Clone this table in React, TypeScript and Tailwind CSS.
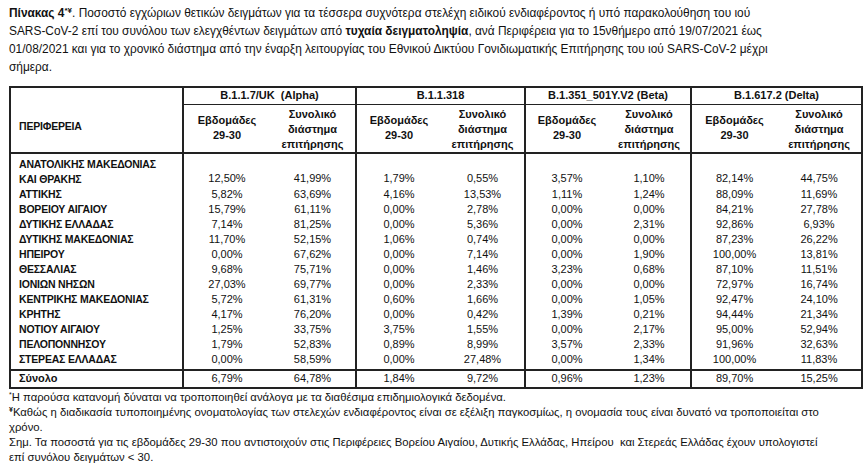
const rows: string[][] = [
  ["ΑΤΤΙΚΗΣ", "5,82%", "63,69%", "4,16%", "13,53%", "1,11%", "1,24%", "88,09%", "11,69%"],
  ["ΒΟΡΕΙΟΥ ΑΙΓΑΙΟΥ", "15,79%", "61,11%", "0,00%", "2,78%", "0,00%", "0,00%", "84,21%", "27,78%"],
  ["ΔΥΤΙΚΗΣ ΕΛΛΑΔΑΣ", "7,14%", "81,25%", "0,00%", "5,36%", "0,00%", "2,31%", "92,86%", "6,93%"],
  ["ΔΥΤΙΚΗΣ ΜΑΚΕΔΟΝΙΑΣ", "11,70%", "52,15%", "1,06%", "0,74%", "0,00%", "0,00%", "87,23%", "26,22%"],
  ["ΗΠΕΙΡΟΥ", "0,00%", "67,62%", "0,00%", "7,14%", "0,00%", "1,90%", "100,00%", "13,81%"],
  ["ΘΕΣΣΑΛΙΑΣ", "9,68%", "75,71%", "0,00%", "1,46%", "3,23%", "0,68%", "87,10%", "11,51%"],
  ["ΙΟΝΙΩΝ ΝΗΣΩΝ", "27,03%", "69,77%", "0,00%", "2,33%", "0,00%", "0,00%", "72,97%", "16,74%"],
  ["ΚΕΝΤΡΙΚΗΣ ΜΑΚΕΔΟΝΙΑΣ", "5,72%", "61,31%", "0,60%", "1,66%", "0,00%", "1,05%", "92,47%", "24,10%"],
  ["ΚΡΗΤΗΣ", "4,17%", "76,20%", "0,00%", "0,42%", "1,39%", "0,21%", "94,44%", "21,34%"],
  ["ΝΟΤΙΟΥ ΑΙΓΑΙΟΥ", "1,25%", "33,75%", "3,75%", "1,55%", "0,00%", "2,17%", "95,00%", "52,94%"],
  ["ΠΕΛΟΠΟΝΝΗΣΟΥ", "1,79%", "52,83%", "0,89%", "8,99%", "3,57%", "2,33%", "91,96%", "32,63%"],
  ["ΣΤΕΡΕΑΣ ΕΛΛΑΔΑΣ", "0,00%", "58,59%", "0,00%", "27,48%", "0,00%", "1,34%", "100,00%", "11,83%"],
];

const first = ["12,50%", "41,99%", "1,79%", "0,55%", "3,57%", "1,10%", "82,14%", "44,75%"];
const total = ["6,79%", "64,78%", "1,84%", "9,72%", "0,96%", "1,23%", "89,70%", "15,25%"];
const strains = ["B.1.1.7/UK\u00a0 (Alpha)", "B.1.1.318", "B.1.351_501Y.V2 (Beta)", "B.1.617.2 (Delta)"];

// group edge gets the vertical rule
const cellCls = (i: number) =>
  "text-center p-0 " + (i % 2 === 0 ? "border-l-2 border-[#222]" : "");

const nameCls = "font-bold pl-[8px] leading-[15px] text-[10.5px] tracking-[-0.2px]";

function SubHeads() {
  return (
    <>
      {strains.map((s) => [
        <th key={s + "a"} className="border-l-2 border-[#222] font-bold text-center align-middle p-0 leading-[15px]">
          Εβδομάδες<br />29-30
        </th>,
        <th key={s + "b"} className="font-bold text-center align-middle p-0 pt-[2px] leading-[15px]">
          Συνολικό<br />διάστημα<br />επιτήρησης
        </th>,
      ])}
    </>
  );
}

export default function App() {
  return (
    <div
      className="w-[868px] h-[471px] bg-white text-[#111] pl-[9px] pt-[4px] overflow-hidden"
      style={{ fontFamily: '"Liberation Sans", Arial, sans-serif' }}
    >
      <p className="text-[11.9px] leading-[18px] whitespace-nowrap">
        <b>
          Πίνακας 4<sup className="text-[8px]">*¥</sup>
        </b>
        . Ποσοστό εγχώριων θετικών δειγμάτων για τα τέσσερα συχνότερα στελέχη ειδικού ενδιαφέροντος ή υπό παρακολούθηση του ιού
        <br />
        SARS-CoV-2 επί του συνόλου των ελεγχθέντων δειγμάτων από <b>τυχαία δειγματοληψία</b>, ανά Περιφέρεια για το 15νθήμερο από 19/07/2021 έως
        <br />
        01/08/2021 και για το χρονικό διάστημα από την έναρξη λειτουργίας του Εθνικού Δικτύου Γονιδιωματικής Επιτήρησης του ιού SARS-CoV-2 μέχρι
        <br />
        σήμερα.
      </p>

      <table className="mt-[10px] w-[852px] table-fixed border-collapse border-2 border-[#222] text-[11px]">
        <colgroup>
          <col className="w-[173px]" />
          <col className="w-[87px]" />
          <col className="w-[86px]" />
          <col className="w-[85px]" />
          <col className="w-[84px]" />
          <col className="w-[83px]" />
          <col className="w-[83px]" />
          <col className="w-[86px]" />
          <col className="w-[85px]" />
        </colgroup>
        <thead>
          <tr className="h-[17px]">
            <th rowSpan={2} className="text-left font-bold pl-[8px] pt-[14px] border-b-2 border-[#222] text-[10.5px] tracking-[-0.2px]">
              ΠΕΡΙΦΕΡΕΙΑ
            </th>
            {strains.map((s) => (
              <th key={s} colSpan={2} className="border-l-2 border-b border-[#222] font-bold text-center p-0 leading-[15px]">
                {s}
              </th>
            ))}
          </tr>
          <tr className="h-[48px] border-b-2 border-[#222]">
            <SubHeads />
          </tr>
        </thead>
        <tbody>
          <tr className="h-[32px]">
            <td className={nameCls + " pt-[3px] align-top"}>
              ΑΝΑΤΟΛΙΚΗΣ ΜΑΚΕΔΟΝΙΑΣ
              <br />
              ΚΑΙ ΘΡΑΚΗΣ
            </td>
            {first.map((v, i) => (
              <td key={i} className={cellCls(i) + " align-bottom pb-[1px] leading-[15px]"}>
                {v}
              </td>
            ))}
          </tr>
          {rows.map((r, ri) => (
            <tr key={r[0]} className={ri === rows.length - 1 ? "h-[18px] align-top" : "h-[15px]"}>
              <td className={nameCls}>{r[0]}</td>
              {r.slice(1).map((v, i) => (
                <td key={i} className={cellCls(i) + " leading-[15px]"}>
                  {v}
                </td>
              ))}
            </tr>
          ))}
          <tr className="h-[18px] border-t-2 border-[#222]">
            <td className="font-bold pl-[8px] leading-[15px]">Σύνολο</td>
            {total.map((v, i) => (
              <td key={i} className={cellCls(i) + " leading-[15px]"}>
                {v}
              </td>
            ))}
          </tr>
        </tbody>
      </table>

      <div className="text-[11.3px] leading-[15px] whitespace-nowrap mt-[1px]">
        <p>
          <sup className="text-[7px]">*</sup>Η παρούσα κατανομή δύναται να τροποποιηθεί ανάλογα με τα διαθέσιμα επιδημιολογικά δεδομένα.
        </p>
        <p>
          <sup className="text-[7px] font-bold">¥</sup>Καθώς η διαδικασία τυποποιημένης ονοματολογίας των στελεχών ενδιαφέροντος είναι σε εξέλιξη παγκοσμίως, η ονομασία τους είναι δυνατό να τροποποιείται στο
          <br />
          χρόνο.
        </p>
        <p>
          Σημ. Τα ποσοστά για τις εβδομάδες 29-30 που αντιστοιχούν στις Περιφέρειες Βορείου Αιγαίου, Δυτικής Ελλάδας, Ηπείρου&nbsp; και Στερεάς Ελλάδας έχουν υπολογιστεί
          <br />
          επί συνόλου δειγμάτων &lt; 30.
        </p>
      </div>
    </div>
  );
}
